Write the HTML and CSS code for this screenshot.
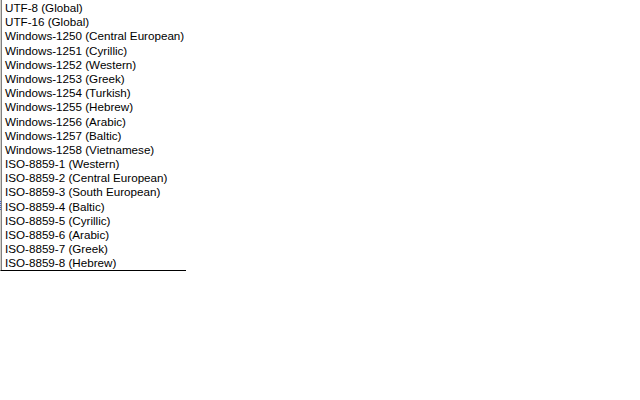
FILE: index.html
```html
<!DOCTYPE html>
<html lang="en">
<head>
  <meta charset="utf-8">
  <title>Encoding</title>
  <link rel="stylesheet" href="styles.css">
</head>
<body>
<div class="droplist">
  <span class="mark"></span>
  <ul class="options">
    <li>UTF-8 (Global)</li>
    <li>UTF-16 (Global)</li>
    <li>Windows-1250 (Central European)</li>
    <li>Windows-1251 (Cyrillic)</li>
    <li>Windows-1252 (Western)</li>
    <li>Windows-1253 (Greek)</li>
    <li>Windows-1254 (Turkish)</li>
    <li>Windows-1255 (Hebrew)</li>
    <li>Windows-1256 (Arabic)</li>
    <li>Windows-1257 (Baltic)</li>
    <li>Windows-1258 (Vietnamese)</li>
    <li>ISO-8859-1 (Western)</li>
    <li>ISO-8859-2 (Central European)</li>
    <li>ISO-8859-3 (South European)</li>
    <li>ISO-8859-4 (Baltic)</li>
    <li>ISO-8859-5 (Cyrillic)</li>
    <li>ISO-8859-6 (Arabic)</li>
    <li>ISO-8859-7 (Greek)</li>
    <li>ISO-8859-8 (Hebrew)</li>
  </ul>
</div>
</body>
</html>
```

FILE: styles.css
```css
body { background: white; margin: 0; padding: 0; font-family: "Liberation Sans", Arial, sans-serif; font-size: 11.65px; color: #000 }

/* the open list box */
.droplist { position: relative; width: 186px; border-left: 1px solid #d4d0c8; box-shadow: inset 1px 0 0 #808080; border-bottom: 1px solid #000; box-sizing: border-box; height: 271px }
.droplist ul.options { list-style: none; margin: 0; padding: 1px 0 0 4px }
.droplist ul.options li { height: 14.2px; line-height: 14.2px; white-space: nowrap }

/* focus dots on the left edge */
.mark { position: absolute; left: -1px; top: 201px; width: 1px; height: 9px; background: repeating-linear-gradient(to bottom, #3a5fcd 0 1px, transparent 1px 2px) }
```
